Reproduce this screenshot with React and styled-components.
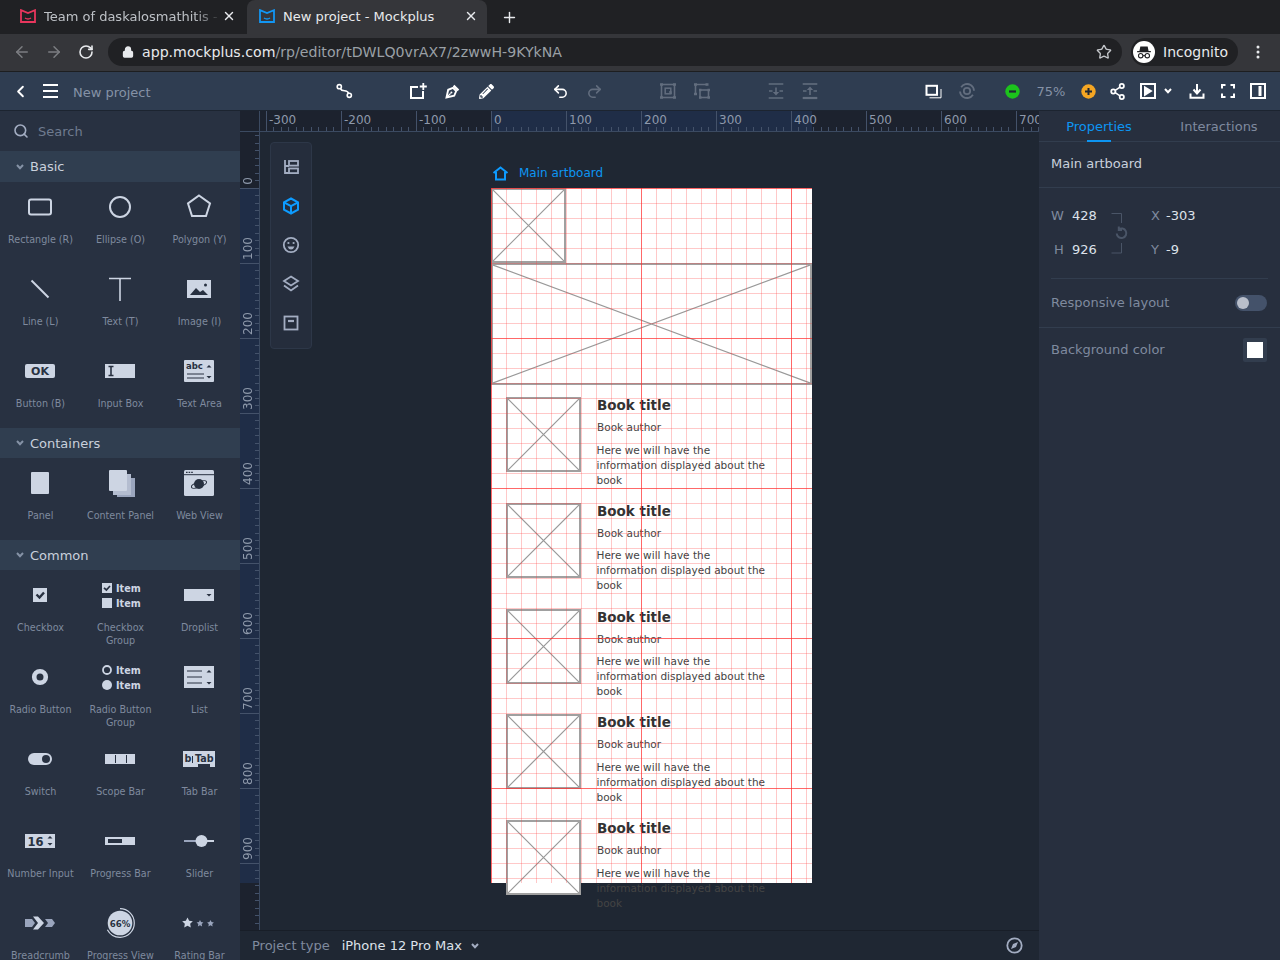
import styled, { createGlobalStyle } from "styled-components";
import { ArrowLeft, ArrowRight, RotateCw, Star, Search, Plus, X, ChevronLeft, Undo2, Redo2, Lock } from "lucide-react";
import { FaPencilAlt } from "react-icons/fa";

const GlobalStyle = createGlobalStyle`
  html, body {
    margin: 0;
    width: 1280px;
    height: 960px;
    overflow: hidden;
    background: #1f2733;
    font-family: "DejaVu Sans", sans-serif;
  }
  #root { width: 1280px; height: 960px; }
`;

const Page = styled.div`
  display: flex;
  flex-direction: column;
  width: 1280px;
  height: 960px;
  overflow: hidden;
`;

/* browser chrome */
const TabStrip = styled.div`
  display: flex;
  align-items: flex-end;
  height: 34px;
  background: #202124;
  flex: none;
`;

const Tab = styled.div`
  display: flex;
  align-items: center;
  flex: none;
  width: ${(p) => (p.$active ? "240px" : "245px")};
  height: 34px;
  padding: 0 8px 2px ${(p) => (p.$active ? "12px" : "20px")};
  margin-right: ${(p) => (p.$active ? "0" : "2px")};
  box-sizing: border-box;
  border-radius: 8px 8px 0 0;
  background: ${(p) => (p.$active ? "#35363a" : "transparent")};
  color: ${(p) => (p.$active ? "#e8eaed" : "#bdc1c6")};
  font-size: 13px;
`;

const TabTitle = styled.span`
  flex: 1;
  margin-left: 8px;
  white-space: nowrap;
  overflow: hidden;
  ${(p) =>
    p.$fade &&
    `-webkit-mask-image: linear-gradient(to right, #000 85%, transparent);`}
`;

const TabClose = styled.span`
  display: flex;
  width: 16px;
  justify-content: center;
  color: #e8eaed;
`;

const NewTab = styled.span`
  display: flex;
  margin-left: 14px;
  height: 34px;
  align-items: center;
  color: #e8eaed;
`;

const NavBar = styled.div`
  display: flex;
  align-items: center;
  height: 38px;
  padding-bottom: 1px;
  box-sizing: border-box;
  background: #35363a;
  border-bottom: 1px solid #1d1e20;
  flex: none;
`;

const NavButton = styled.span`
  display: flex;
  justify-content: center;
  width: 32px;
  color: ${(p) => (p.$dim ? "#7c7e82" : "#e8eaed")};
  &:first-child { margin-left: 6px; }
`;

const UrlBox = styled.div`
  display: flex;
  align-items: center;
  width: 1014px;
  height: 28px;
  margin-left: 6px;
  padding: 0 10px 0 14px;
  box-sizing: border-box;
  background: #202124;
  border-radius: 14px;
  font-size: 14.15px;
  color: #9aa0a6;
`;

const UrlHost = styled.span`
  color: #e8eaed;
  margin-left: 8px;
`;

const UrlStar = styled.span`
  display: flex;
  margin-left: auto;
  color: #c4c7cb;
`;

const ProfileChip = styled.div`
  display: flex;
  align-items: center;
  height: 28px;
  width: 107px;
  margin-left: 9px;
  border-radius: 14px;
  background: #202124;
  box-sizing: border-box;
  padding-left: 2px;
  color: #e8eaed;
  font-size: 14px;
  gap: 8px;
`;

const Kebab = styled.span`
  display: flex;
  margin-left: 18px;
`;

/* app toolbar */
const Toolbar = styled.div`
  display: flex;
  align-items: center;
  height: 39px;
  box-sizing: border-box;
  background: #2f3d51;
  border-bottom: 1px solid #1c2430;
  flex: none;
`;

const ToolLeft = styled.div`
  display: flex;
  align-items: center;
  width: 328px;
  padding-left: 11px;
  box-sizing: border-box;
  color: #fff;
`;

const MenuIcon = styled.span`
  display: flex;
  margin-left: 13px;
`;

const ProjectName = styled.span`
  margin: 2px 0 0 15px;
  font-size: 13px;
  color: #8592a6;
`;

const ToolSlot = styled.span`
  display: flex;
  align-items: center;
  justify-content: center;
  flex: none;
  width: ${(p) => p.$w || 34}px;
  margin-left: ${(p) => p.$ml || 0}px;
  color: ${(p) => (p.$dim ? "#626d7e" : "#fff")};
`;

const Zoom = styled.span`
  font-size: 13px;
  color: #8592a6;
`;

/* workspace */
const Workspace = styled.div`
  display: flex;
  flex: 1;
  min-height: 0;
`;

const Sidebar = styled.aside`
  width: 240px;
  flex: none;
  background: #283141;
  overflow: hidden;
`;

const SearchBox = styled.div`
  display: flex;
  align-items: center;
  height: 40px;
  padding-left: 13px;
  box-sizing: border-box;
  gap: 9px;
  color: #6f7b8f;
  font-size: 13px;
`;

const SectionHead = styled.div`
  display: flex;
  align-items: center;
  height: ${(p) => (p.$tall ? 31 : 30)}px;
  padding-left: 16px;
  box-sizing: border-box;
  gap: 6px;
  background: #303e50;
  color: #c9d0dc;
  font-size: 13px;
`;

const HeadCaret = styled.span`
  display: flex;
  color: #8592a6;
`;

const Palette = styled.div`
  display: grid;
  grid-template-columns: 81px 79px 79px;
  grid-auto-rows: 82px;
`;

const Cell = styled.div`
  display: flex;
  flex-direction: column;
  align-items: center;
  padding-top: 8px;
  box-sizing: border-box;
`;

const CellLabel = styled.div`
  width: 76px;
  margin-top: 9px;
  padding: 0 3px;
  box-sizing: border-box;
  text-align: center;
  font-size: 9.6px;
  line-height: 13px;
  color: #7f8a9e;
`;

const CenterColumn = styled.div`
  display: flex;
  flex-direction: column;
  flex: 1;
  min-width: 0;
`;

const Canvas = styled.div`
  display: flex;
  flex-direction: column;
  flex: 1;
  min-height: 0;
  background: #1f2733;
`;

const HRuler = styled.div`
  display: flex;
  flex: none;
  height: 21px;
  overflow: hidden;
  box-sizing: border-box;
  border-bottom: 1px solid #3b4a61;
  background: linear-gradient(
    to right,
    #1c222e 0 251px,
    #1f2d47 251px 572px,
    #1c222e 572px
  );
`;

const RulerCorner = styled.div`
  flex: none;
  width: 20px;
  border-right: 1px solid #3b4a61;
  box-sizing: border-box;
  margin-right: 6px;
`;

const HMark = styled.div`
  flex: none;
  width: 75px;
  box-sizing: border-box;
  border-left: 1px solid #44526a;
  padding: 2px 0 0 2px;
  font-size: 12px;
  line-height: 14px;
  color: #8e99ab;
  background-image: linear-gradient(to right, #44526a 1px, transparent 1px),
    linear-gradient(to right, #44526a 1px, transparent 1px);
  background-size: 15px 4px;
  background-position: 6px bottom, 14px bottom;
  background-repeat: repeat-x;
`;

const CanvasBody = styled.div`
  display: flex;
  flex: 1;
  min-height: 0;
`;

const VRuler = styled.div`
  flex: none;
  width: 20px;
  box-sizing: border-box;
  overflow: hidden;
  border-right: 1px solid #3b4a61;
  background: linear-gradient(
    to bottom,
    #1c222e 0 56px,
    #1f2d47 56px 751px,
    #1c222e 751px
  );
`;

const VMark = styled.div`
  display: flex;
  align-items: center;
  justify-content: flex-end;
  width: 100%;
  height: 75px;
  box-sizing: border-box;
  border-bottom: 1px solid #44526a;
  writing-mode: vertical-rl;
  font-size: 12px;
  line-height: 14px;
  color: #8e99ab;
  ${(p) => p.$first && `margin-top: -18px;`}
  background-image: linear-gradient(to bottom, #44526a 1px, transparent 1px),
    linear-gradient(to bottom, #44526a 1px, transparent 1px);
  background-size: 4px 15px;
  background-position: right 6px, right 14px;
  background-repeat: repeat-y;
`;

const VLabel = styled.span`
  transform: rotate(180deg);
  padding-top: 3px;
  margin-right: 3px;
`;

const Stage = styled.div`
  position: relative;
  flex: 1;
  min-width: 0;
  overflow: hidden;
`;

const ToolDock = styled.div`
  position: absolute;
  left: 10px;
  top: 10px;
  display: flex;
  flex-direction: column;
  align-items: center;
  width: 42px;
  height: 207px;
  padding-top: 4px;
  box-sizing: border-box;
  background: #252d3c;
  border: 1px solid #2d3748;
  border-radius: 4px;
`;

const DockItem = styled.span`
  display: flex;
  align-items: center;
  justify-content: center;
  height: 39px;
  color: ${(p) => (p.$active ? "#0d9bff" : "#a3adc2")};
`;

const ArtboardTag = styled.div`
  position: absolute;
  left: 232px;
  top: 32px;
  display: flex;
  align-items: center;
  gap: 10px;
  color: #0d95f2;
  font-size: 12px;
  line-height: 18px;
`;

const Artboard = styled.div`
  position: absolute;
  left: 231px;
  top: 56px;
  width: 321px;
  height: 695px;
  background: #fff;
  color: #333;
`;

const GridOverlay = styled.div`
  position: absolute;
  inset: 0;
  pointer-events: none;
  background-image:
    linear-gradient(to right, rgba(255, 40, 40, 0.6) 1px, transparent 1px),
    linear-gradient(to bottom, rgba(255, 40, 40, 0.6) 1px, transparent 1px),
    linear-gradient(to right, rgba(255, 60, 60, 0.28) 1px, transparent 1px),
    linear-gradient(to bottom, rgba(255, 60, 60, 0.28) 1px, transparent 1px);
  background-size: 150px 150px, 150px 150px, 15px 15px, 15px 15px;
`;

const Holder = styled.div`
  box-sizing: border-box;
  border: 2px solid #a0a0a0;
  background: #fff;
  width: ${(p) => p.$w}px;
  height: ${(p) => p.$h}px;
  flex: none;
  svg { display: block; width: 100%; height: 100%; }
`;

const BookList = styled.div`
  display: flex;
  flex-direction: column;
  margin-top: 12px;
`;

const BookRow = styled.div`
  display: flex;
  height: 105.75px;
  flex: none;
  padding-left: 15px;
  gap: 16px;
`;

const BookText = styled.div`
  width: 172px;
`;

const BookTitle = styled.div`
  font-size: 13.5px;
  font-weight: 700;
  line-height: 16px;
`;

const BookAuthor = styled.div`
  font-size: 10.5px;
  line-height: 14px;
  margin-top: 7px;
  color: #444;
`;

const BookBlurb = styled.div`
  font-size: 10.5px;
  line-height: 15px;
  margin: 8.5px 0 0 -0.5px;
  color: #444;
`;

const Footer = styled.div`
  display: flex;
  align-items: center;
  flex: none;
  height: 30px;
  padding: 0 16px 0 12px;
  box-sizing: border-box;
  background: #1f2733;
  border-top: 1px solid #181e28;
  font-size: 13px;
  color: #7f8a9e;
`;

const DeviceName = styled.span`
  margin-left: 12px;
  color: #dde2ea;
`;

const FootCaret = styled.span`
  display: flex;
  margin-left: 9px;
  color: #a3adc2;
`;

const Compass = styled.span`
  display: flex;
  margin-left: auto;
  color: #a3adc2;
`;

/* properties */
const Inspector = styled.aside`
  width: 241px;
  flex: none;
  background: #272f3e;
  font-size: 13px;
  color: #7f8a9e;
`;

const InspectorTabs = styled.div`
  display: flex;
  height: 31px;
  box-sizing: border-box;
  border-bottom: 1px solid #323d4e;
`;

const InspectorTab = styled.div`
  position: relative;
  width: 120px;
  height: 30px;
  text-align: center;
  line-height: 32px;
  color: ${(p) => (p.$active ? "#0d95f2" : "#7f8a9e")};
  ${(p) =>
    p.$active &&
    `&::after {
      content: "";
      position: absolute;
      left: 48px;
      bottom: -1px;
      width: 24px;
      height: 2px;
      background: #0d95f2;
    }`}
`;

const ArtboardName = styled.div`
  height: 46px;
  line-height: 43px;
  padding-left: 12px;
  box-sizing: border-box;
  color: #c9d0dc;
  border-bottom: 1px solid #323d4e;
`;

const GeometryGrid = styled.div`
  position: relative;
  display: grid;
  grid-template-columns: 100px 110px;
  grid-auto-rows: 34px;
  align-items: center;
  margin: 10px 12px 0;
  padding-bottom: 12px;
  border-bottom: 1px solid #323d4e;
`;

const Field = styled.div`
  display: flex;
  align-items: center;
  color: #7f8a9e;
`;

const FieldKey = styled.span`
  width: ${(p) => p.$w || 21}px;
  padding-left: ${(p) => p.$pad || 0}px;
  box-sizing: border-box;
`;

const FieldValue = styled.span`
  color: #dde2ea;
`;

const LinkMark = styled.span`
  position: absolute;
  left: 60px;
  top: 14px;
`;

const PropRow = styled.div`
  display: flex;
  align-items: center;
  justify-content: space-between;
  height: ${(p) => p.$h}px;
  box-sizing: border-box;
  padding: 0 13px 0 12px;
  border-bottom: ${(p) => (p.$line ? "1px solid #323d4e" : "none")};
`;

const PropLabel = styled.span`
  margin-bottom: 2px;
`;

const Toggle = styled.span`
  display: flex;
  align-items: center;
  width: 32px;
  height: 16px;
  padding-left: 2px;
  box-sizing: border-box;
  border-radius: 8px;
  background: #44526a;
  &::before {
    content: "";
    width: 12px;
    height: 12px;
    border-radius: 50%;
    background: #b9bfcb;
  }
`;

const Swatch = styled.span`
  display: flex;
  align-items: center;
  justify-content: center;
  width: 24px;
  height: 24px;
  border-radius: 2px;
  background: #323d4e;
  &::before {
    content: "";
    width: 16px;
    height: 16px;
    background: #fff;
  }
`;

/* ---- drawings ---- */
const Favicon = ({ color }) => (
  <svg width="16" height="14" viewBox="0 0 16 14" fill="none" stroke={color} strokeWidth="1.8">
    <path d="M1 1.2 L8 4 L15 1.2 V13 H1 Z" />
    <path d="M5 9 Q8 11 11 9" strokeWidth="1.5" />
  </svg>
);

const Glyph = ({ size = 20, children, vb = 20 }) => (
  <svg width={size} height={size} viewBox={`0 0 ${vb} ${vb}`} fill="none" stroke="currentColor" strokeWidth="2">
    {children}
  </svg>
);

const c = "#cdd5e3";
const m = "#9aa5bd";
const d = "#283141";
const boldText = { fontFamily: "DejaVu Sans, sans-serif", fontWeight: 700 };

const PaletteIcon = ({ children }) => (
  <svg width="60" height="34" viewBox="-12 0 60 34" fill="none" style={{ flex: "none" }}>
    {children}
  </svg>
);

const UpDown = ({ x, y1, y2 }) => (
  <>
    <path d={`M${x - 2.5} ${y1 + 2.5} L${x} ${y1} L${x + 2.5} ${y1 + 2.5} Z`} fill={d} />
    <path d={`M${x - 2.5} ${y2} L${x} ${y2 + 2.5} L${x + 2.5} ${y2} Z`} fill={d} />
  </>
);

const star = (cx, cy, r) => {
  const pts = [];
  for (let i = 0; i < 10; i++) {
    const a = -Math.PI / 2 + (i * Math.PI) / 5;
    const rr = i % 2 ? r * 0.5 : r;
    pts.push(`${cx + rr * Math.cos(a)},${cy + rr * Math.sin(a)}`);
  }
  return pts.join(" ");
};

const basic = [
  ["Rectangle (R)", <rect x="6" y="9.5" width="22" height="15" rx="2" stroke={c} strokeWidth="2" />],
  ["Ellipse (O)", <circle cx="17" cy="17" r="10" stroke={c} strokeWidth="2" />],
  ["Polygon (Y)", <path d="M17 5.5 L28 13.5 L24 26 H10 L6 13.5 Z" stroke={c} strokeWidth="2" />],
  ["Line (L)", <path d="M8.5 8.5 L25.5 25.5" stroke={c} strokeWidth="2" />],
  ["Text (T)", <path d="M6 6.5 H28 M17 6.5 V29" stroke={c} strokeWidth="1.6" />],
  [
    "Image (I)",
    <>
      <rect x="5" y="8" width="24" height="18" fill={c} />
      <path d="M8 23 L14 16 L18 20 L21 18 L26 23 Z" fill={d} />
      <circle cx="23.5" cy="13" r="1.5" fill={d} />
    </>,
  ],
  [
    "Button (B)",
    <>
      <rect x="2" y="10" width="30" height="14" rx="2" fill={c} />
      <text x="17" y="21" textAnchor="middle" fontSize="11" fill={d} style={boldText}>OK</text>
    </>,
  ],
  [
    "Input Box",
    <>
      <rect x="2" y="10" width="30" height="14" fill={c} />
      <path d="M5.5 12.5 H10.5 M5.5 21.5 H10.5 M8 12.5 V21.5" stroke={d} strokeWidth="1.6" />
    </>,
  ],
  [
    "Text Area",
    <>
      <rect x="2" y="6" width="30" height="22" rx="1" fill={c} />
      <text x="4" y="15" fontSize="8.5" fill={d} style={boldText}>abc</text>
      <path d="M5 20 H22 M5 24 H22" stroke={d} strokeWidth="1" />
      <UpDown x={27} y1={11} y2={22} />
    </>,
  ],
];

const containers = [
  ["Panel", <rect x="8" y="6" width="18" height="22" rx="1" fill={c} />],
  [
    "Content Panel",
    <>
      <rect x="14" y="12" width="18" height="19" fill={m} />
      <rect x="10" y="8" width="18" height="21" fill="#b4bdd0" />
      <rect x="6" y="4" width="18" height="21" rx="1" fill={c} />
    </>,
  ],
  [
    "Web View",
    <>
      <rect x="2" y="4" width="30" height="26" rx="1.5" fill={c} />
      <path d="M2 8.7 H32" stroke={d} strokeWidth="1" />
      <path d="M4 6.4 H11" stroke={d} strokeWidth="1.4" strokeDasharray="1.6 1" />
      <circle cx="17" cy="18" r="5" fill={d} />
      <ellipse cx="17" cy="18.5" rx="8" ry="2.6" stroke={d} strokeWidth="1" transform="rotate(-20 17 18.5)" />
    </>,
  ],
];

const ItemRow = ({ y }) => (
  <text x="13" y={y} fontSize="9.6" fill={c} style={boldText}>Item</text>
);

const common = [
  [
    "Checkbox",
    <>
      <rect x="10" y="10" width="14" height="14" fill={c} />
      <path d="M13.5 16.5 L16.5 19.5 L21 14.5" stroke={d} strokeWidth="2.4" />
    </>,
  ],
  [
    "Checkbox Group",
    <>
      <rect x="-1" y="5" width="10" height="10" fill={c} />
      <path d="M1 9.8 L3.4 12 L7 8" stroke={d} strokeWidth="1.7" />
      <ItemRow y={14} />
      <rect x="-1" y="20" width="10" height="10" fill={c} />
      <ItemRow y={29} />
    </>,
  ],
  [
    "Droplist",
    <>
      <rect x="2" y="11" width="30" height="12" fill={c} />
      <path d="M24.5 16 H29.5 L27 18.5 Z" fill={d} />
    </>,
  ],
  [
    "Radio Button",
    <circle cx="17" cy="17" r="5.8" stroke={c} strokeWidth="4.6" />,
  ],
  [
    "Radio Button Group",
    <>
      <circle cx="4" cy="10" r="4" stroke={c} strokeWidth="1.8" />
      <ItemRow y={14} />
      <circle cx="4" cy="25" r="5" fill={c} />
      <ItemRow y={29} />
    </>,
  ],
  [
    "List",
    <>
      <rect x="2" y="6" width="30" height="22" fill={c} />
      <path d="M5 11 H20 M5 17 H20 M5 23 H20" stroke={d} strokeWidth="1" />
      <UpDown x={27} y1={10} y2={22} />
    </>,
  ],
  [
    "Switch",
    <>
      <rect x="5" y="11" width="24" height="12" rx="6" fill={c} />
      <circle cx="23" cy="17" r="4" fill={d} />
    </>,
  ],
  [
    "Scope Bar",
    <>
      <rect x="2" y="12" width="30" height="10" fill={c} />
      <path d="M12.5 13 V21 M23.5 13 V21" stroke={d} strokeWidth="1" />
    </>,
  ],
  [
    "Tab Bar",
    <>
      <path d="M1 9 H33 V25 H28 V22 H16 V25 H1 Z" fill={c} />
      <text x="2.5" y="20" fontSize="9.6" fill={d} style={boldText}>b</text>
      <path d="M10.5 14 V21" stroke={d} strokeWidth="1" />
      <text x="13" y="20" fontSize="9.6" fill={d} style={boldText}>Tab</text>
    </>,
  ],
  [
    "Number Input",
    <>
      <rect x="2" y="10" width="30" height="14" fill={c} />
      <text x="4.5" y="21.5" fontSize="11.5" fill={d} style={boldText}>16</text>
      <UpDown x={27} y1={12} y2={19} />
    </>,
  ],
  [
    "Progress Bar",
    <>
      <rect x="2" y="13" width="30" height="8" fill={c} />
      <rect x="5" y="15" width="14" height="4" fill={d} />
    </>,
  ],
  [
    "Slider",
    <>
      <path d="M2 17 H16" stroke={m} strokeWidth="2" />
      <path d="M24 17 H32" stroke={c} strokeWidth="2" />
      <circle cx="19.5" cy="17" r="6" fill={c} />
    </>,
  ],
  [
    "Breadcrumb",
    <>
      <path d="M2 13 H9 L12 17 L9 21 H2 Z" fill={m} />
      <path d="M10 10.5 H15 L21 17 L15 23.5 H10 L15 17 Z" fill={c} />
      <path d="M22 13 H29 L32 17 L29 21 H22 L25 17 Z" fill={m} />
    </>,
  ],
  [
    "Progress View",
    <>
      <circle cx="17" cy="17" r="12.3" fill={c} />
      <circle cx="17" cy="17" r="14.3" stroke={c} strokeWidth="1.2" strokeDasharray="60 90" transform="rotate(-90 17 17)" />
      <text x="17" y="20.5" textAnchor="middle" fontSize="8.6" fill={d} style={boldText}>66%</text>
    </>,
  ],
  [
    "Rating Bar",
    <>
      <polygon points={star(5.5, 17, 5.6)} fill={c} />
      <polygon points={star(18, 17.5, 3.6)} fill={m} />
      <polygon points={star(28.5, 17.5, 3.6)} fill={m} />
    </>,
  ],
];

const HolderMark = ({ w, h }) => (
  <Holder $w={w} $h={h}>
    <svg viewBox="0 0 100 100" preserveAspectRatio="none">
      <path d="M0 0 L100 100 M100 0 L0 100" stroke="#999" strokeWidth="1.2" vectorEffect="non-scaling-stroke" />
    </svg>
  </Holder>
);

const DownCaret = () => (
  <svg width="8" height="6" viewBox="0 0 8 6" fill="none" stroke="currentColor" strokeWidth="2">
    <path d="M1 1 L4 4.2 L7 1" />
  </svg>
);

const Section = ({ title, items, tall }) => (
  <>
    <SectionHead $tall={tall}>
      <HeadCaret><DownCaret /></HeadCaret>
      {title}
    </SectionHead>
    <Palette>
      {items.map(([label, icon]) => (
        <Cell key={label}>
          <PaletteIcon>{icon}</PaletteIcon>
          <CellLabel>{label}</CellLabel>
        </Cell>
      ))}
    </Palette>
  </>
);

const books = [0, 1, 2, 3, 4];

export default function App() {
  return (
    <Page>
      <GlobalStyle />
      <TabStrip>
        <Tab>
          <Favicon color="#e8365d" />
          <TabTitle $fade>Team of daskalosmathitis - Mockplus</TabTitle>
          <TabClose><X size={14} strokeWidth={2.4} /></TabClose>
        </Tab>
        <Tab $active>
          <Favicon color="#1296f3" />
          <TabTitle>New project - Mockplus</TabTitle>
          <TabClose><X size={14} strokeWidth={2.4} /></TabClose>
        </Tab>
        <NewTab><Plus size={17} strokeWidth={2} /></NewTab>
      </TabStrip>

      <NavBar>
        <NavButton $dim><ArrowLeft size={18} strokeWidth={2} /></NavButton>
        <NavButton $dim><ArrowRight size={18} strokeWidth={2} /></NavButton>
        <NavButton><RotateCw size={16} strokeWidth={2.4} /></NavButton>
        <UrlBox>
          <Lock size={12} strokeWidth={2.6} color="#e8eaed" fill="#e8eaed" />
          <UrlHost>app.mockplus.com</UrlHost>/rp/editor/tDWLQ0vrAX7/2zwwH-9KYkNA
          <UrlStar><Star size={16} strokeWidth={2} /></UrlStar>
        </UrlBox>
        <ProfileChip>
          <svg width="22" height="22" viewBox="0 0 24 24">
            <circle cx="12" cy="12" r="12" fill="#fff" />
            <path d="M8 6 H16 L17 11 H7 Z M4.5 11 H19.5 V12.4 H4.5 Z" fill="#202124" />
            <circle cx="8.4" cy="16" r="2.4" fill="none" stroke="#202124" strokeWidth="1.2" />
            <circle cx="15.6" cy="16" r="2.4" fill="none" stroke="#202124" strokeWidth="1.2" />
            <path d="M10.8 16 H13.2" stroke="#202124" strokeWidth="1.2" />
          </svg>
          Incognito
        </ProfileChip>
        <Kebab>
          <svg width="4" height="14" viewBox="0 0 4 14" fill="#e8eaed">
            <circle cx="2" cy="2" r="1.5" />
            <circle cx="2" cy="7" r="1.5" />
            <circle cx="2" cy="12" r="1.5" />
          </svg>
        </Kebab>
      </NavBar>

      <Toolbar>
        <ToolLeft>
          <ChevronLeft size={19} strokeWidth={2.4} />
          <MenuIcon>
            <svg width="15" height="14" viewBox="0 0 15 14" stroke="#fff" strokeWidth="2">
              <path d="M0 1 H15 M0 7 H15 M0 13 H15" />
            </svg>
          </MenuIcon>
          <ProjectName>New project</ProjectName>
        </ToolLeft>
        <ToolSlot>
          <Glyph>
            <circle cx="4.3" cy="5.7" r="2.1" strokeWidth="1.6" />
            <circle cx="14.3" cy="14.3" r="2.1" strokeWidth="1.6" />
            <path d="M5.4 7.6 Q6.3 9.6 9.5 9.8 Q12.7 10 13.5 12.3" strokeWidth="1.6" />
          </Glyph>
        </ToolSlot>
        <ToolSlot $ml={39}>
          <Glyph>
            <path d="M10 6 H3 V17 H15 V10" />
            <path d="M15.3 2 V9 M11.8 5.5 H18.8" strokeWidth="1.8" />
          </Glyph>
        </ToolSlot>
        <ToolSlot>
          <Glyph size={15} vb={15}>
            <path d="M1.5 13.5 L3.2 5.8 L8 3.8 L11.2 7 L9.2 11.8 Z" strokeWidth="1.9" />
            <path d="M1.5 13.5 L5.6 9.4" strokeWidth="1.2" />
            <circle cx="6.4" cy="8.6" r="1" fill="currentColor" stroke="none" />
            <path d="M8.6 1.6 L13.4 6.4" strokeWidth="2.2" />
          </Glyph>
        </ToolSlot>
        <ToolSlot><FaPencilAlt size={15} /></ToolSlot>
        <ToolSlot $ml={40}><Undo2 size={17} strokeWidth={2.2} /></ToolSlot>
        <ToolSlot $dim><Redo2 size={17} strokeWidth={2.2} /></ToolSlot>
        <ToolSlot $ml={40} $dim>
          <Glyph>
            <rect x="3.5" y="3.5" width="13" height="13" strokeWidth="1.6" />
            <rect x="7.2" y="7.2" width="5.6" height="5.6" strokeWidth="1.5" />
            <path d="M11 11 H13 V13" strokeWidth="1.5" />
            <path d="M2 3.5 H5 M15 3.5 H18 M2 16.5 H5 M15 16.5 H18" strokeWidth="2.6" />
          </Glyph>
        </ToolSlot>
        <ToolSlot $dim>
          <Glyph>
            <path d="M3.5 3.5 H15 M3.5 3.5 V13" strokeWidth="1.6" />
            <rect x="8" y="9" width="8.5" height="7.5" strokeWidth="1.6" />
            <path d="M2 3.5 H5 M13.5 3.5 H16.5 M2 13 H5 M7 9 H9.5 M15.5 9 H18 M7 16.5 H9.5 M15.5 16.5 H18" strokeWidth="2.4" />
          </Glyph>
        </ToolSlot>
        <ToolSlot $ml={40} $dim>
          <Glyph>
            <path d="M2.7 3 H17.3 M2.7 17 H17.3" strokeWidth="1.6" />
            <path d="M10 6.5 V13 M3 10 H6.5 M13.5 10 H17" strokeWidth="1.6" />
            <path d="M6.8 11 H13.2 L10 14.5 Z" fill="currentColor" stroke="none" />
          </Glyph>
        </ToolSlot>
        <ToolSlot $dim>
          <Glyph>
            <path d="M2.7 3 H17.3" strokeWidth="1.6" />
            <path d="M2.7 17 H17.3" strokeWidth="2.2" />
            <path d="M10 14 V7.5 M3 10 H6.5 M13.5 10 H17" strokeWidth="1.6" />
            <path d="M6.8 9 H13.2 L10 5.5 Z" fill="currentColor" stroke="none" />
          </Glyph>
        </ToolSlot>
        <ToolSlot $ml={89}>
          <Glyph>
            <rect x="3.5" y="4.8" width="10.5" height="9" />
            <path d="M18 8 V16.8 H6.5" strokeWidth="1" />
          </Glyph>
        </ToolSlot>
        <ToolSlot $dim>
          <Glyph size={18} vb={18}>
            <circle cx="9" cy="9" r="7" strokeWidth="1.8" strokeDasharray="17.5 4.5" transform="rotate(32 9 9)" />
            <circle cx="9" cy="9" r="3.2" strokeWidth="1.8" />
          </Glyph>
        </ToolSlot>
        <ToolSlot $ml={11}>
          <svg width="15" height="15" viewBox="0 0 15 15">
            <circle cx="7.5" cy="7.5" r="7.2" fill="#1cc31c" />
            <path d="M4 7.5 H11" stroke="#1f2733" strokeWidth="2.2" />
          </svg>
        </ToolSlot>
        <ToolSlot $w={44}><Zoom>75%</Zoom></ToolSlot>
        <ToolSlot $w={30}>
          <svg width="15" height="15" viewBox="0 0 15 15">
            <circle cx="7.5" cy="7.5" r="7.2" fill="#f5a623" />
            <path d="M4 7.5 H11 M7.5 4 V11" stroke="#1f2733" strokeWidth="2" />
          </svg>
        </ToolSlot>
        <ToolSlot $w={30}>
          <Glyph size={18} vb={18}>
            <circle cx="12.8" cy="4" r="2.1" strokeWidth="1.8" />
            <circle cx="4.3" cy="9.5" r="2.1" strokeWidth="1.8" />
            <circle cx="12.8" cy="15" r="2.1" strokeWidth="1.8" />
            <path d="M6.2 8.3 L11 5.2 M6.2 10.7 L11 13.8" strokeWidth="1.6" />
          </Glyph>
        </ToolSlot>
        <ToolSlot $w={30}>
          <Glyph size={18} vb={18}>
            <rect x="2" y="2" width="14" height="14" />
            <path d="M5 3.8 L13.7 9 L5 14.4 Z" fill="currentColor" stroke="none" />
          </Glyph>
        </ToolSlot>
        <ToolSlot $w={10}><DownCaret /></ToolSlot>
        <ToolSlot $w={30} $ml={9}>
          <Glyph size={18} vb={18}>
            <path d="M9 2 V11 M5.5 7.5 L9 11.5 L12.5 7.5" />
            <path d="M2.5 11.5 V15.8 H15.5 V11.5" />
          </Glyph>
        </ToolSlot>
        <ToolSlot $w={30} $ml={1}>
          <Glyph size={16} vb={16}>
            <path d="M2 5.5 V2 H5.5 M10.5 2 H14 V5.5 M14 10.5 V14 H10.5 M5.5 14 H2 V10.5" />
          </Glyph>
        </ToolSlot>
        <ToolSlot $w={30}>
          <Glyph size={16} vb={16}>
            <rect x="1" y="1" width="14" height="14" />
            <path d="M10 3 V13" strokeWidth="3" />
          </Glyph>
        </ToolSlot>
      </Toolbar>

      <Workspace>
        <Sidebar>
          <SearchBox>
            <Search size={16} strokeWidth={2.4} color="#a3adc2" />
            Search
          </SearchBox>
          <Section title="Basic" items={basic} tall />
          <Section title="Containers" items={containers} />
          <Section title="Common" items={common} />
        </Sidebar>

        <CenterColumn>
          <Canvas>
            <HRuler>
              <RulerCorner />
              {[-300, -200, -100, 0, 100, 200, 300, 400, 500, 600, 700].map((n) => (
                <HMark key={n}>{n}</HMark>
              ))}
            </HRuler>
            <CanvasBody>
              <VRuler>
                {[0, 100, 200, 300, 400, 500, 600, 700, 800, 900].map((n, i) => (
                  <VMark key={n} $first={i === 0}><VLabel>{n}</VLabel></VMark>
                ))}
                <VMark />
              </VRuler>
              <Stage>
                <ToolDock>
                  <DockItem>
                    <Glyph size={18} vb={18}>
                      <path d="M3 2 V15 H7 M3 8 H7" strokeWidth="1.8" />
                      <rect x="7" y="3" width="9" height="4.6" strokeWidth="1.8" />
                      <rect x="7" y="10.5" width="9" height="4.6" strokeWidth="1.8" />
                    </Glyph>
                  </DockItem>
                  <DockItem $active>
                    <Glyph size={18} vb={18}>
                      <path d="M9 1.5 L16 5.3 V12.7 L9 16.5 L2 12.7 V5.3 Z" />
                      <path d="M2.5 5.6 L9 9.2 L15.5 5.6 M9 9.2 V16" />
                    </Glyph>
                  </DockItem>
                  <DockItem>
                    <Glyph size={18} vb={18}>
                      <circle cx="9" cy="9" r="7.2" strokeWidth="1.8" />
                      <circle cx="6.4" cy="7" r="1.1" fill="currentColor" stroke="none" />
                      <circle cx="11.6" cy="7" r="1.1" fill="currentColor" stroke="none" />
                      <path d="M5.5 10.5 H12.5 Q11.5 13.4 9 13.4 Q6.5 13.4 5.5 10.5 Z" fill="currentColor" stroke="none" />
                    </Glyph>
                  </DockItem>
                  <DockItem>
                    <Glyph size={18} vb={18}>
                      <path d="M9 1.5 L16 6 L9 10.5 L2 6 Z" strokeWidth="1.8" />
                      <path d="M2 10.5 L9 15.5 L16 10.5" strokeWidth="1.8" />
                    </Glyph>
                  </DockItem>
                  <DockItem>
                    <Glyph size={18} vb={18}>
                      <rect x="2.5" y="2.5" width="13" height="13" strokeWidth="1.8" />
                      <path d="M6 7 H12" strokeWidth="2.2" />
                    </Glyph>
                  </DockItem>
                </ToolDock>

                <ArtboardTag>
                  <svg width="17" height="15" viewBox="0 0 17 15" fill="none" stroke="#0d9bff" strokeWidth="2">
                    <path d="M1.5 7 L8.5 1.5 L15.5 7 M4 6 V13.5 H13 V6" />
                  </svg>
                  Main artboard
                </ArtboardTag>

                <Artboard>
                  <HolderMark w={75} h={75} />
                  <HolderMark w={321} h={122} />
                  <BookList>
                    {books.map((b) => (
                      <BookRow key={b}>
                        <HolderMark w={75} h={75} />
                        <BookText>
                          <BookTitle>Book title</BookTitle>
                          <BookAuthor>Book author</BookAuthor>
                          <BookBlurb>Here we will have the information displayed about the book</BookBlurb>
                        </BookText>
                      </BookRow>
                    ))}
                  </BookList>
                  <GridOverlay />
                </Artboard>
              </Stage>
            </CanvasBody>
          </Canvas>
          <Footer>
            Project type
            <DeviceName>iPhone 12 Pro Max</DeviceName>
            <FootCaret><DownCaret /></FootCaret>
            <Compass>
              <Glyph size={17} vb={17}>
                <circle cx="8.5" cy="8.5" r="7.2" strokeWidth="1.8" />
                <path d="M12 5 L10 10 L5 12 L7 7 Z" fill="currentColor" stroke="none" />
              </Glyph>
            </Compass>
          </Footer>
        </CenterColumn>

        <Inspector>
          <InspectorTabs>
            <InspectorTab $active>Properties</InspectorTab>
            <InspectorTab>Interactions</InspectorTab>
          </InspectorTabs>
          <ArtboardName>Main artboard</ArtboardName>
          <GeometryGrid>
            <Field><FieldKey>W</FieldKey><FieldValue>428</FieldValue></Field>
            <Field><FieldKey $w={15}>X</FieldKey><FieldValue>-303</FieldValue></Field>
            <Field><FieldKey $pad={3}>H</FieldKey><FieldValue>926</FieldValue></Field>
            <Field><FieldKey $w={15}>Y</FieldKey><FieldValue>-9</FieldValue></Field>
            <LinkMark>
              <svg width="18" height="44" viewBox="0 0 18 44" fill="none" stroke="#4a5567" strokeWidth="1">
                <path d="M0.5 1.5 H10.5 V11 M10.5 31 V41 H0.5" />
                <path d="M7.6 17.4 A4.8 4.8 0 1 1 5.7 21.5 M7.8 14.5 V18 H11" strokeWidth="2" />
              </svg>
            </LinkMark>
          </GeometryGrid>
          <PropRow $line $h={49}>
            <PropLabel>Responsive layout</PropLabel>
            <Toggle />
          </PropRow>
          <PropRow $h={44}>
            <PropLabel>Background color</PropLabel>
            <Swatch />
          </PropRow>
        </Inspector>
      </Workspace>
    </Page>
  );
}
